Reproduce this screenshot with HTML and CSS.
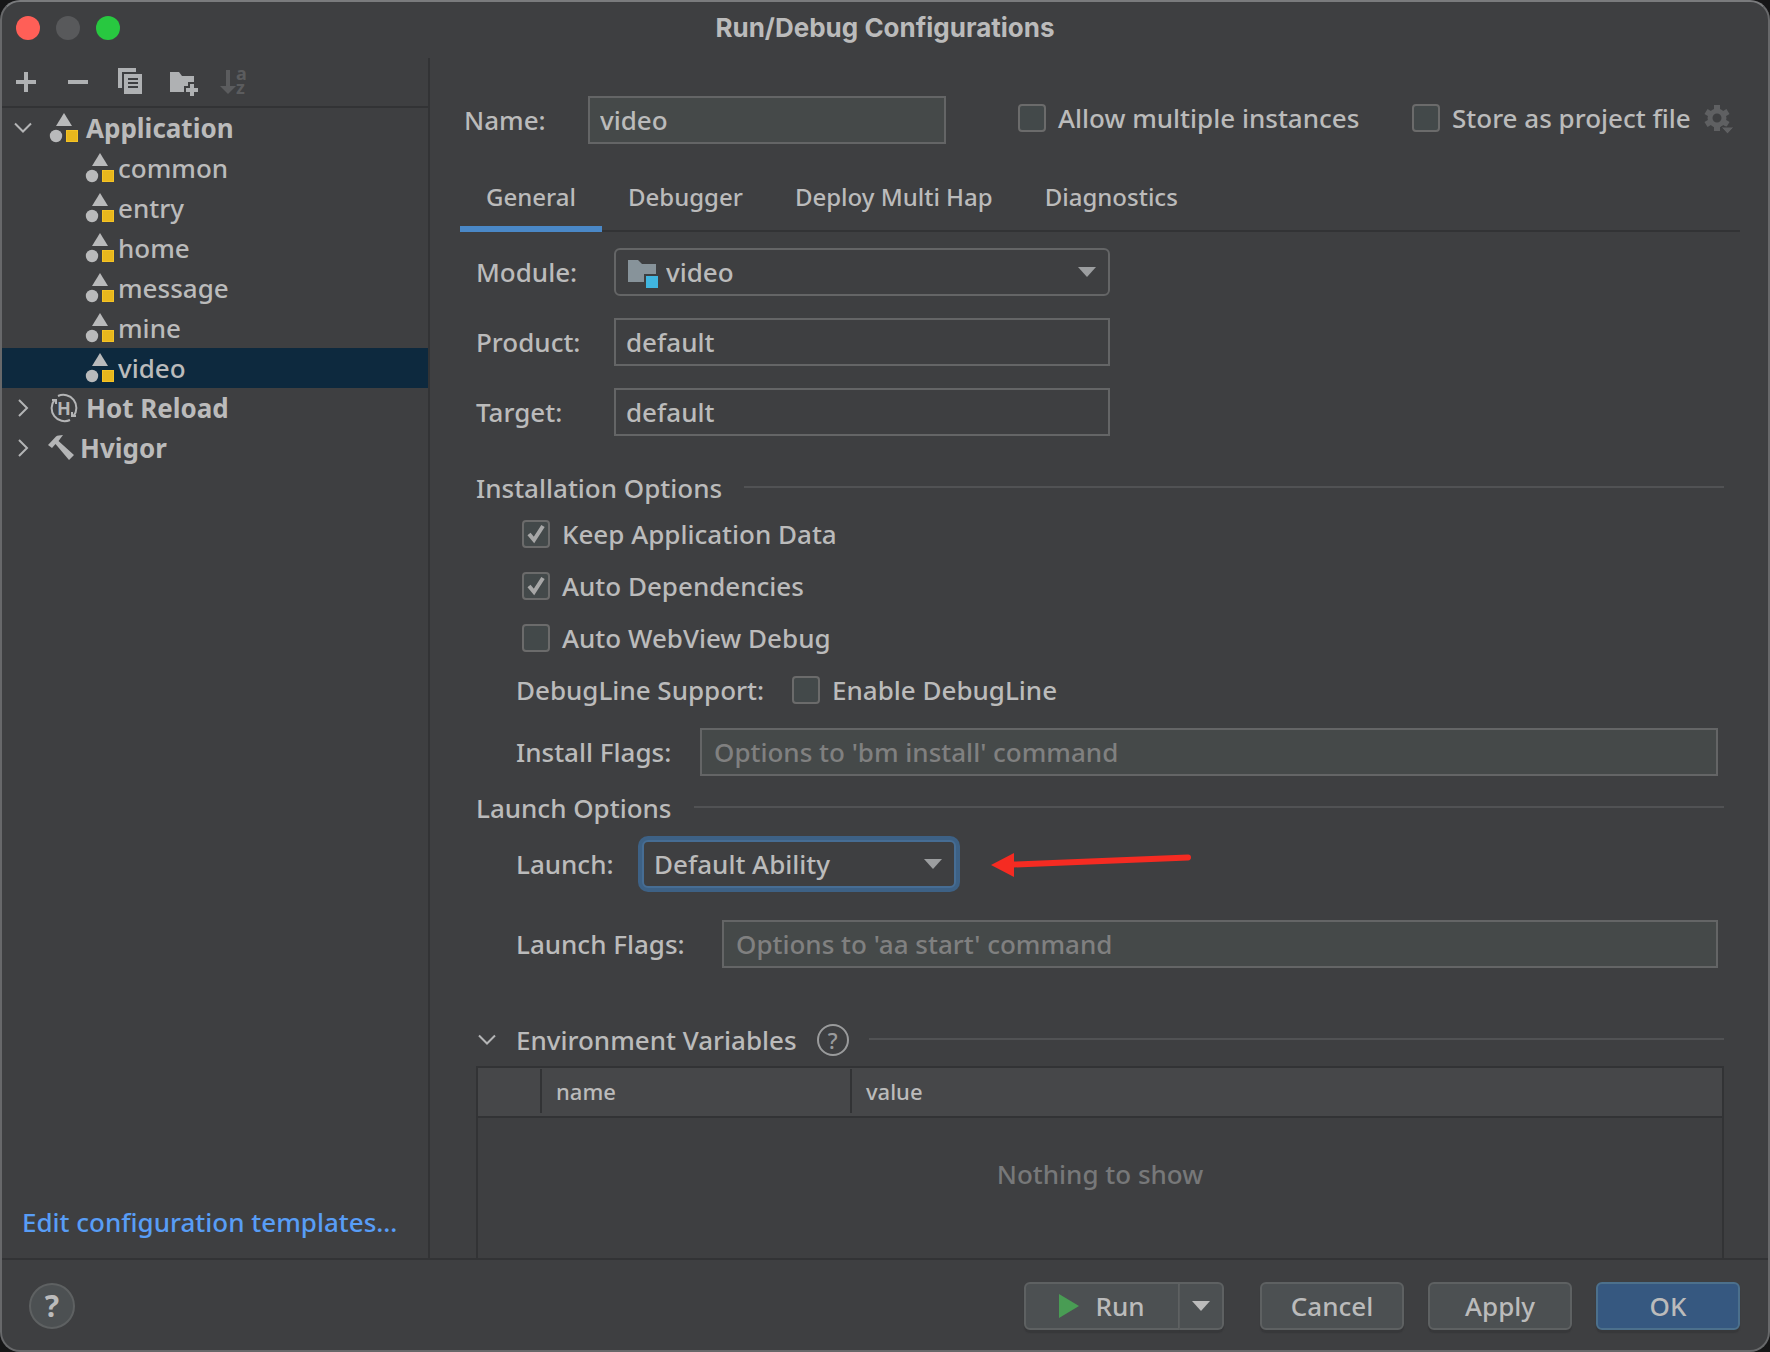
FILE: index.html
```html
<!DOCTYPE html>
<html lang="en">
<head>
  <meta charset="UTF-8" />
  <meta name="viewport" content="width=device-width, initial-scale=1.0"/>
  <title>Run/Debug Configurations</title>
  <link rel="stylesheet" href="styles.css">
</head>
<body>
  <!-- shared icons -->
  <svg class="sprite" aria-hidden="true">
    <symbol id="icon-app" viewBox="0 0 30 32">
      <path d="M16 1 L24 14 H8 Z" fill="#b9babb"/>
      <circle cx="8" cy="24" r="6.200" fill="#b9babb"/>
      <rect x="18" y="18" width="12" height="12" fill="#f5c324"/>
      <rect x="19" y="19" width="10" height="10" fill="#e8b71d"/>
    </symbol>
    <symbol id="icon-down" viewBox="0 0 18 12">
      <path d="M1 1.500 L9 9.500 L17 1.500" fill="none" stroke="#b4b5b6" stroke-width="2"/>
    </symbol>
    <symbol id="icon-right" viewBox="0 0 18 18">
      <path d="M5 1 L13 9 L5 17" fill="none" stroke="#b4b5b6" stroke-width="2"/>
    </symbol>
  </svg>

  <div class="window">
    <header class="titlebar">
      <div class="lights">
        <span class="light red"></span>
        <span class="light gray"></span>
        <span class="light green"></span>
      </div>
      <h1>Run/Debug Configurations</h1>
    </header>

    <div class="content">
      <aside class="sidebar">
        <div class="toolbar">
          <button type="button" aria-label="Add">
            <svg width="28" height="28" viewBox="0 0 28 28"><path d="M4 14 H24 M14 4 V24" stroke="#afb1b3" stroke-width="4"/></svg>
          </button>
          <button type="button" aria-label="Remove">
            <svg width="28" height="28" viewBox="0 0 28 28"><path d="M4 14 H24" stroke="#afb1b3" stroke-width="4"/></svg>
          </button>
          <button type="button" aria-label="Copy">
            <svg width="28" height="28" viewBox="0 0 28 28">
              <path d="M2 0 H20 V4 H6 V20 H2 Z" fill="#afb1b3"/>
              <path d="M8 6 H26 V26 H8 Z" fill="#afb1b3"/>
              <path d="M12 11 H22 M12 15 H22 M12 19 H22" stroke="#3e3f41" stroke-width="2"/>
            </svg>
          </button>
          <button type="button" aria-label="New folder">
            <svg class="spill" width="28" height="28" viewBox="0 0 28 28">
              <path d="M2 4 H11 L14 8 H26 V14 H20 V18 H16 V24 H2 Z" fill="#afb1b3"/>
              <path d="M18 22 H30 M24 16 V28" stroke="#afb1b3" stroke-width="4"/>
            </svg>
          </button>
          <button type="button" aria-label="Sort" disabled>
            <svg class="spill" width="28" height="28" viewBox="0 0 28 28">
              <path d="M6 2 H10 V18 H16 L8 26 L0 18 H6 Z" fill="#5b5c5e"/>
              <text x="16" y="12" class="sort-text">a</text>
              <text x="16" y="26" class="sort-text">z</text>
            </svg>
          </button>
        </div>

        <ul class="tree">
          <li class="group">
            <svg class="toggle" width="18" height="12"><use href="#icon-down"/></svg>
            <svg class="icon" width="30" height="32"><use href="#icon-app"/></svg>
            <span>Application</span>
          </li>
          <li class="item"><svg class="icon" width="30" height="32"><use href="#icon-app"/></svg><span>common</span></li>
          <li class="item"><svg class="icon" width="30" height="32"><use href="#icon-app"/></svg><span>entry</span></li>
          <li class="item"><svg class="icon" width="30" height="32"><use href="#icon-app"/></svg><span>home</span></li>
          <li class="item"><svg class="icon" width="30" height="32"><use href="#icon-app"/></svg><span>message</span></li>
          <li class="item"><svg class="icon" width="30" height="32"><use href="#icon-app"/></svg><span>mine</span></li>
          <li class="item selected"><svg class="icon" width="30" height="32"><use href="#icon-app"/></svg><span>video</span></li>
          <li class="group">
            <svg class="toggle" width="18" height="18"><use href="#icon-right"/></svg>
            <svg class="icon" width="30" height="32" viewBox="0 0 30 32">
              <path d="M10 4 A13 13 0 0 1 25.500 24 M22 28 A13 13 0 0 1 6.500 8" fill="none" stroke="#b4b5b6" stroke-width="2"/>
              <path d="M4 8 H8 V12 M28 24 H24 V20" fill="none" stroke="#b4b5b6" stroke-width="2"/>
              <text x="16" y="23" text-anchor="middle" class="reload-text">H</text>
            </svg>
            <span>Hot Reload</span>
          </li>
          <li class="group">
            <svg class="toggle" width="18" height="18"><use href="#icon-right"/></svg>
            <svg class="icon hammer" width="26" height="32" viewBox="0 0 26 32">
              <path d="M0 13 L8 4.500 Q10 3 15 3 L10.500 9 L26 23 L21 28 L7.500 12 L4 16 Z" fill="#b4b5b6"/>
            </svg>
            <span>Hvigor</span>
          </li>
        </ul>

        <a class="templates" href="#">Edit configuration templates…</a>
      </aside>

      <main class="main">
        <div class="name-row">
          <label class="name-label" for="name">Name:</label>
          <input type="text" class="field name-field" id="name" value="video">
          <div class="name-options">
            <label class="check"><input type="checkbox">Allow multiple instances</label>
            <label class="check"><input type="checkbox">Store as project file</label>
            <svg class="gear" width="32" height="32" viewBox="0 0 32 32">
              <circle cx="14" cy="16" r="7" fill="none" stroke="#5f6062" stroke-width="5"/>
              <path d="M14 3 V9 M14 23 V29 M3 9.500 L8 12.500 M20 19.500 L25 22.500 M3 22.500 L8 19.500 M20 12.500 L25 9.500" stroke="#5f6062" stroke-width="6"/>
              <path d="M18 25 H31 L24.500 32 Z" fill="#5f6062" stroke="#3e3f41"/>
            </svg>
          </div>
        </div>

        <nav class="tabs">
          <button type="button" class="tab active">General</button>
          <button type="button" class="tab">Debugger</button>
          <button type="button" class="tab">Deploy Multi Hap</button>
          <button type="button" class="tab">Diagnostics</button>
        </nav>

        <div class="panel">
          <div class="form-grid">
            <label for="module">Module:</label>
            <div class="module-box">
              <svg class="module-icon" width="32" height="32" viewBox="0 0 32 32">
                <path d="M0 0 H10 L14 4 H28 V14 H16 V22 H0 Z" fill="#87939a"/>
                <rect x="18" y="16" width="12" height="12" fill="#40b6e0"/>
              </svg>
              <select class="field select module-select" id="module"><option>video</option></select>
            </div>
            <label for="product">Product:</label>
            <input type="text" class="field plain" id="product" value="default">
            <label for="target">Target:</label>
            <input type="text" class="field plain" id="target" value="default">
          </div>

          <h2 class="section-title install-title">Installation Options</h2>
          <div class="checks">
            <label class="check"><input type="checkbox" checked>Keep Application Data</label>
            <label class="check"><input type="checkbox" checked>Auto Dependencies</label>
            <label class="check"><input type="checkbox">Auto WebView Debug</label>
          </div>
          <div class="row debug-row">
            <span class="debug-label">DebugLine Support:</span>
            <label class="check"><input type="checkbox">Enable DebugLine</label>
          </div>
          <div class="row">
            <label class="install-label" for="installFlags">Install Flags:</label>
            <input type="text" class="field grow" id="installFlags" placeholder="Options to 'bm install' command">
          </div>

          <h2 class="section-title">Launch Options</h2>
          <div class="row">
            <label class="launch-label" for="launch">Launch:</label>
            <select class="field select focused" id="launch"><option>Default Ability</option></select>
            <svg class="arrow" width="204" height="28" viewBox="0 0 204 28">
              <path d="M22 14.500 L197 7.500" stroke="#f52b22" stroke-width="6" stroke-linecap="round"/>
              <path d="M0 15 L23 3 V27 Z" fill="#f52b22"/>
            </svg>
          </div>
          <div class="row flags-row">
            <label class="flags-label" for="launchFlags">Launch Flags:</label>
            <input type="text" class="field grow" id="launchFlags" placeholder="Options to 'aa start' command">
          </div>

          <h2 class="section-title env-title">
            <svg class="env-toggle" width="18" height="12"><use href="#icon-down"/></svg>
            <span>Environment Variables</span>
            <span class="hint">?</span>
          </h2>
          <div class="env-box">
            <table class="env-table">
              <thead>
                <tr><th class="col-check"></th><th class="col-name"><span>name</span></th><th><span>value</span></th></tr>
              </thead>
              <tbody>
                <tr><td colspan="3">Nothing to show</td></tr>
              </tbody>
            </table>
          </div>
        </div>
      </main>
    </div>

    <footer class="footer">
      <button type="button" class="help">?</button>
      <div class="split">
        <button type="button" class="btn run">
          <svg width="20" height="24" viewBox="0 0 20 24"><path d="M0 0 L20 12 L0 24 Z" fill="#499c54"/></svg>
          Run
        </button>
        <button type="button" class="btn more" aria-label="More run options">
          <svg width="18" height="10" viewBox="0 0 18 10"><path d="M0 0 H18 L9 10 Z" fill="#bbbbbb"/></svg>
        </button>
      </div>
      <button type="button" class="btn">Cancel</button>
      <button type="button" class="btn">Apply</button>
      <button type="button" class="btn primary">OK</button>
    </footer>
  </div>
</body>
</html>
```
FILE: styles.css
```css
:root {
  --bg: #3e3f41;
  --text: #bbbbbb;
  --line: #323335;
  --separator: #515254;
  --field-bg: #454949;
  --field-border: #646566;
  --button-bg: #4c5052;
  --button-border: #5e6162;
  --accent: #4a88c7;
}

* {
  box-sizing: border-box;
}

body {
  margin: 0;
  background: #161617;
  color: var(--text);
  font-family: "Noto Sans", "Open Sans", sans-serif;
  font-size: 26px;
  font-weight: 500;
  line-height: 40px;
}

button, input, select {
  font: inherit;
  color: inherit;
}

button {
  border: none;
  padding: 0;
  background: none;
}

svg {
  display: block;
  flex: none;
}

.sprite {
  position: absolute;
  width: 0;
  height: 0;
}

.window {
  display: flex;
  flex-direction: column;
  height: 100vh;
  background: var(--bg);
  border: 2px solid #67686a;
  border-top-color: #7a7b7d;
  border-radius: 20px;
  overflow: hidden;
}

/* title bar */
.titlebar {
  display: grid;
  grid-template-columns: 1fr auto 1fr;
  align-items: center;
  height: 56px;
  padding: 0 14px 4px;
}

.lights {
  display: flex;
  gap: 16px;
}

.light {
  width: 24px;
  height: 24px;
  border-radius: 50%;
}

.red {
  background: #ff5f57;
}

.gray {
  background: #58595b;
}

.green {
  background: #28c840;
}

h1 {
  margin: 0;
  font-family: Inter, sans-serif;
  font-size: 26px;
  font-weight: 700;
}

.content {
  flex: 1;
  display: flex;
  min-height: 0;
}

/* left side */
.sidebar {
  display: flex;
  flex-direction: column;
  width: 428px;
  flex: none;
  border-right: 2px solid var(--line);
}

.toolbar {
  display: flex;
  align-items: center;
  gap: 24px;
  height: 50px;
  padding: 0 10px;
  border-bottom: 2px solid var(--line);
}

.spill {
  overflow: visible;
}

.sort-text {
  font-size: 18px;
  font-weight: 700;
  fill: #5b5c5e;
}

.reload-text {
  font-size: 18px;
  fill: #b4b5b6;
}

.tree {
  flex: 1;
  margin: 0;
  padding: 0;
  list-style: none;
}

.tree li {
  display: flex;
  align-items: center;
  height: 40px;
}

.group {
  padding-left: 12px;
  font-weight: 700;
}

.item {
  padding-left: 82px;
}

.toggle {
  margin-right: 16px;
}

.icon {
  margin-right: 8px;
}

.item .icon {
  margin-right: 4px;
}

.hammer {
  margin-right: 6px;
}

.selected {
  background: #0d293e;
}

.templates {
  padding: 0 20px 16px;
  color: #589df6;
  text-decoration: none;
  white-space: nowrap;
}

/* right side */
.main {
  flex: 1;
  display: flex;
  flex-direction: column;
  min-width: 0;
  padding: 38px 28px 0 30px;
}

.name-row {
  display: flex;
  align-items: center;
  padding-left: 4px;
}

.name-label {
  width: 124px;
}

.name-field {
  width: 358px;
}

.name-options {
  display: flex;
  align-items: center;
  margin-left: 72px;
  padding-bottom: 4px;
}

.name-options .check:first-child {
  width: 394px;
}

.gear {
  margin-left: 12px;
}

.field {
  height: 48px;
  padding: 0 10px;
  border: 2px solid var(--field-border);
  border-radius: 0;
  background-color: var(--field-bg);
  outline: none;
}

.field::placeholder {
  color: #808080;
  opacity: 1;
}

.plain {
  background-color: var(--bg);
}

.grow {
  flex: 1;
  min-width: 0;
  padding: 0 12px;
}

.select {
  appearance: none;
  border-radius: 6px;
  background-color: var(--bg);
  background-image: url("data:image/svg+xml,%3Csvg xmlns='http://www.w3.org/2000/svg' width='18' height='10'%3E%3Cpath d='M0 0H18L9 10Z' fill='%239c9ea0'/%3E%3C/svg%3E");
  background-repeat: no-repeat;
  background-position: right 12px center;
}

.focused {
  width: 314px;
  border-color: #466d94;
  box-shadow: 0 0 0 4px #3d6185;
}

.check {
  display: flex;
  align-items: center;
  gap: 12px;
  white-space: nowrap;
}

.check input {
  appearance: none;
  width: 28px;
  height: 28px;
  margin: 0;
  border: 2px solid #6b6b6b;
  border-radius: 4px;
  background-color: #43494a;
}

.check input:checked {
  background-image: url("data:image/svg+xml,%3Csvg xmlns='http://www.w3.org/2000/svg' width='24' height='24'%3E%3Cpath d='M5 12L10 18L19 4' fill='none' stroke='%23a7a7a7' stroke-width='4'/%3E%3C/svg%3E");
}

/* tabs */
.tabs {
  display: flex;
  margin-top: 20px;
  box-shadow: inset 0 -2px var(--line);
}

.tab {
  height: 68px;
  padding: 0 26px 2px;
  font-size: 24px;
}

.tab.active {
  box-shadow: inset 0 -6px var(--accent);
}

.panel {
  flex: 1;
  display: flex;
  flex-direction: column;
  min-height: 0;
  padding: 16px 16px 0;
}

.form-grid {
  display: grid;
  grid-template-columns: 138px 496px;
  gap: 22px 0;
  align-items: center;
}

.module-box {
  position: relative;
  display: flex;
}

.module-icon {
  position: absolute;
  left: 14px;
  top: 12px;
  pointer-events: none;
}

.module-select {
  width: 100%;
  padding-left: 50px;
}

.section-title {
  display: flex;
  align-items: center;
  gap: 22px;
  height: 40px;
  margin: 12px 0 0;
  font-size: 26px;
  font-weight: 500;
}

.section-title::after {
  content: "";
  flex: 1;
  height: 2px;
  margin-bottom: 2px;
  background: var(--separator);
}

.install-title {
  margin-top: 32px;
}

.checks {
  padding-left: 46px;
}

.checks .check {
  height: 52px;
}

.row {
  display: flex;
  align-items: center;
  margin-top: 12px;
  padding: 0 6px 0 40px;
}

.debug-row {
  height: 52px;
  margin-top: 0;
}

.debug-label {
  width: 276px;
}

.install-label {
  width: 184px;
}

.launch-label {
  width: 126px;
}

.flags-row {
  margin-top: 32px;
}

.flags-label {
  width: 206px;
}

.arrow {
  margin-left: 35px;
}

/* environment variables */
.env-title {
  margin-top: 52px;
  gap: 20px;
}

.env-toggle {
  margin-left: 2px;
}

.hint {
  width: 32px;
  height: 32px;
  border: 2px solid #9a9b9c;
  border-radius: 50%;
  font-size: 22px;
  line-height: 28px;
  text-align: center;
  color: #9a9b9c;
}

.env-box {
  flex: 1;
  margin-top: 6px;
  border: 2px solid var(--line);
  border-bottom: none;
}

.env-table {
  width: 100%;
  border-spacing: 0;
  table-layout: fixed;
}

.env-table th {
  height: 50px;
  padding: 0 0 2px;
  border-bottom: 2px solid var(--line);
  background: #464749;
  font-size: 22px;
  font-weight: 500;
  text-align: left;
}

.env-table th span {
  display: block;
  padding-left: 14px;
  border-left: 2px solid var(--line);
  line-height: 44px;
}

.col-check {
  width: 62px;
}

.col-name {
  width: 310px;
}

.env-table td {
  height: 112px;
  padding: 0;
  color: #777879;
  text-align: center;
}

/* bottom buttons */
.footer {
  display: flex;
  align-items: center;
  gap: 24px;
  height: 92px;
  padding: 2px 28px 0 27px;
  border-top: 2px solid var(--line);
}

.help {
  width: 46px;
  height: 46px;
  margin-right: auto;
  border: 2px solid var(--button-border);
  border-radius: 50%;
  background: var(--button-bg);
  font-size: 30px;
  font-weight: 700;
  line-height: 42px;
}

.btn {
  width: 144px;
  height: 48px;
  border: 2px solid var(--button-border);
  border-radius: 6px;
  background: var(--button-bg);
  box-shadow: 0 3px 1px #37383a;
}

.split {
  display: flex;
  margin-right: 12px;
}

.run {
  display: flex;
  align-items: center;
  justify-content: center;
  gap: 16px;
  width: 156px;
  border-radius: 6px 0 0 6px;
}

.more {
  display: flex;
  align-items: center;
  justify-content: center;
  width: 44px;
  border-left: none;
  border-radius: 0 6px 6px 0;
}

.primary {
  background: #365880;
  border-color: #4c708c;
}
```
